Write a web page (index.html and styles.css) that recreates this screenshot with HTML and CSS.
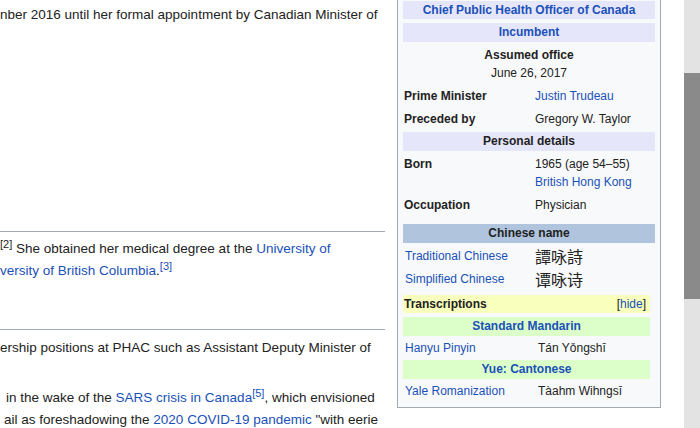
FILE: index.html
```html
<!DOCTYPE html>
<html lang="en">
<head>
<meta charset="utf-8">
<title>Theresa Tam</title>
<link rel="stylesheet" href="styles.css">
</head>
<body>
<div class="page">
  <div class="main">
    <div class="content">
      <p class="line l1">nber 2016 until her formal appointment by Canadian Minister of</p>
      <div class="rule rule-a"></div>
      <div class="para p2">
        <p class="line"><sup class="ref">[2]</sup> She obtained her medical degree at the <a href="#">University of</a></p>
        <p class="line"><a href="#">versity of British Columbia</a>.<sup class="ref"><a href="#">[3]</a></sup></p>
      </div>
      <div class="rule rule-b"></div>
      <p class="line l3">ership positions at PHAC such as Assistant Deputy Minister of</p>
      <div class="para p4">
        <p class="line ind1">in the wake of the <a href="#">SARS crisis in Canada</a><sup class="ref"><a href="#">[5]</a></sup>, which envisioned</p>
        <p class="line ind2">ail as foreshadowing the <a href="#">2020 COVID-19 pandemic</a> "with eerie</p>
      </div>
    </div>
    <aside class="infobox">
      <div class="hdr h1"><a href="#">Chief Public Health Officer of Canada</a></div>
      <div class="hdr h2"><a href="#">Incumbent</a></div>
      <div class="assumed">
        <div class="bold">Assumed office</div>
        <div>June 26, 2017</div>
      </div>
      <div class="row gap4"><span class="lbl">Prime Minister</span><span class="val"><a href="#">Justin Trudeau</a></span></div>
      <div class="row gap3"><span class="lbl">Preceded by</span><span class="val">Gregory W. Taylor</span></div>
      <div class="hdr h3">Personal details</div>
      <div class="row gap3"><span class="lbl">Born</span><span class="val">1965 (age 54–55)<br><a href="#">British Hong Kong</a></span></div>
      <div class="row gap3"><span class="lbl">Occupation</span><span class="val">Physician</span></div>
      <div class="hdr-cn">Chinese name</div>
      <div class="row gap3 cn"><span class="lbl"><a href="#">Traditional Chinese</a></span><span class="val han tc">譚咏詩</span></div>
      <div class="row gap3 cn"><span class="lbl"><a href="#">Simplified Chinese</a></span><span class="val han sc">谭咏诗</span></div>
      <div class="nested">
        <div class="trans"><span class="bold">Transcriptions</span><span class="hide">[<a href="#">hide</a>]</span></div>
        <div class="sub s1"><a href="#">Standard Mandarin</a></div>
        <div class="row gap2 cn2"><span class="lbl"><a href="#">Hanyu Pinyin</a></span><span class="val">Tán Yǒngshī</span></div>
        <div class="sub s2"><a href="#">Yue: Cantonese</a></div>
        <div class="row gap2 cn2"><span class="lbl"><a href="#">Yale Romanization</a></span><span class="val">Tàahm Wihngsī</span></div>
      </div>
    </aside>
  </div>
  <div class="scrollbar"><div class="thumb"></div></div>
</div>
</body>
</html>
```
FILE: styles.css
```css
html, body {
  margin: 0;
  padding: 0;
  background: #ffffff;
}
body {
  font-family: "Liberation Sans", Arial, sans-serif;
  color: #222222;
}
a {
  color: #1a51b8;
  text-decoration: none;
}
.page {
  display: flex;
  width: 700px;
  height: 428px;
  overflow: hidden;
}
.main {
  width: 684px;
  flex: none;
  display: flex;
  align-items: flex-start;
}
.content {
  width: 385px;
  flex: none;
  font-size: 13.5px;
  overflow: hidden;
}
.line {
  margin: 0;
  height: 22px;
  line-height: 22px;
  white-space: nowrap;
}
.l1 { margin-top: 4px; }
.rule {
  border-top: 1px solid #a2a9b1;
}
.rule-a { margin-top: 205px; }
.p2 { margin-top: 6px; }
.rule-b { margin-top: 47px; }
.l3 { margin-top: 7px; }
.p4 { margin-top: 28px; }
.ind1 { padding-left: 6px; }
.ind2 { padding-left: 4px; }
.ref {
  font-size: 11px;
  line-height: 1;
  vertical-align: 5px;
}
.infobox {
  margin-left: 12px;
  width: 252px;
  flex: none;
  border: 1px solid #a2a9b1;
  border-top: none;
  background: #f8f9fa;
  padding: 1px 5px 6px 5px;
  font-size: 12px;
  line-height: 18px;
  color: #222222;
  display: flex;
  flex-direction: column;
}
.bold { font-weight: bold; }
.hdr {
  background: #e6e6fa;
  text-align: center;
  font-weight: bold;
  height: 19px;
  line-height: 19px;
}
.h1 { height: 18px; line-height: 19px; }
.h2 { margin-top: 4px; }
.h3 { margin-top: 3px; }
.assumed {
  margin-top: 4px;
  text-align: center;
}
.row {
  display: grid;
  grid-template-columns: 132px 1fr;
  padding: 1px 0;
}
.gap4 { margin-top: 4px; }
.gap3 { margin-top: 3px; }
.gap2 { margin-top: 2px; }
.row .lbl {
  font-weight: bold;
  padding-left: 1px;
}
.row.cn .lbl, .row.cn2 .lbl {
  font-weight: normal;
  padding-left: 2px;
}
.row.cn2 {
  grid-template-columns: 135px 1fr;
}
.han {
  font-size: 16px;
  line-height: 18px;
  font-family: "Noto Sans CJK TC", sans-serif;
}
.han.sc {
  font-family: "Noto Sans CJK SC", sans-serif;
}
.hdr-cn {
  margin-top: 9px;
  background: #b0c4de;
  text-align: center;
  font-weight: bold;
  height: 19px;
  line-height: 19px;
}
.nested {
  margin-right: 5px;
  display: flex;
  flex-direction: column;
}
.trans {
  margin-top: 6px;
  background: #f9ffbc;
  height: 18px;
  line-height: 18px;
  display: flex;
  justify-content: space-between;
  padding: 0 4px 0 1px;
}
.hide { font-weight: normal; }
.sub {
  background: #dcffc9;
  text-align: center;
  font-weight: bold;
  height: 19px;
  line-height: 19px;
}
.s1 { margin-top: 4px; }
.s2 { margin-top: 2px; }
.scrollbar {
  width: 16px;
  flex: none;
  background: #e3e3e3;
  height: 428px;
}
.thumb {
  margin-top: 73px;
  height: 226px;
  background: #8a8a8a;
}
```
